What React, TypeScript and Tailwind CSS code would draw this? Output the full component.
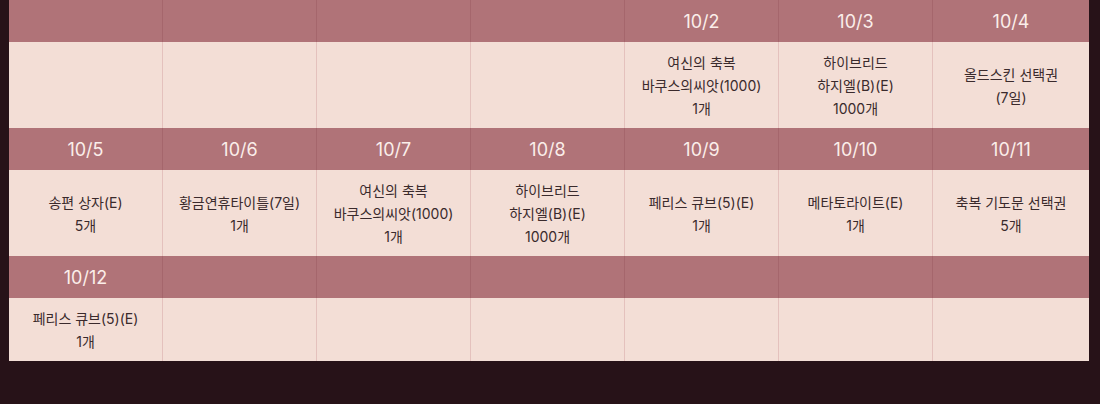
import React from "react";

type Cell = { date?: string; lines?: string[] };

const rows: Cell[][] = [
  [
    {},
    {},
    {},
    {},
    { date: "10/2", lines: ["여신의 축복", "바쿠스의씨앗(1000)", "1개"] },
    { date: "10/3", lines: ["하이브리드", "하지엘(B)(E)", "1000개"] },
    { date: "10/4", lines: ["올드스킨 선택권", "(7일)"] },
  ],
  [
    { date: "10/5", lines: ["송편 상자(E)", "5개"] },
    { date: "10/6", lines: ["황금연휴타이틀(7일)", "1개"] },
    { date: "10/7", lines: ["여신의 축복", "바쿠스의씨앗(1000)", "1개"] },
    { date: "10/8", lines: ["하이브리드", "하지엘(B)(E)", "1000개"] },
    { date: "10/9", lines: ["페리스 큐브(5)(E)", "1개"] },
    { date: "10/10", lines: ["메타토라이트(E)", "1개"] },
    { date: "10/11", lines: ["축복 기도문 선택권", "5개"] },
  ],
  [
    { date: "10/12", lines: ["페리스 큐브(5)(E)", "1개"] },
    {},
    {},
    {},
    {},
    {},
    {},
  ],
];

export default function App() {
  return (
    <div
      className="w-full h-[404px] bg-[#271218] pl-[9px] pr-[11px]"
      style={{ fontFamily: 'Inter, "Noto Sans CJK KR", "Noto Sans", sans-serif' }}
    >
      <div className="w-[1080px]">
        {rows.map((row, ri) => (
          <React.Fragment key={ri}>
            <div className="grid grid-cols-[repeat(6,154px)_1fr] bg-[#b07378] h-[42px]">
              {row.map((c, ci) => (
                <div
                  key={ci}
                  className={
                    "flex items-center justify-center text-[18px] text-[#fbeeea] " +
                    (ci < 6 ? "border-r border-[#a5666c]" : "")
                  }
                >
                  {c.date ?? ""}
                </div>
              ))}
            </div>
            <div className="grid grid-cols-[repeat(6,154px)_1fr] bg-[#f3ded6]">
              {row.map((c, ci) => (
                <div
                  key={ci}
                  className={
                    "flex flex-col items-center justify-center pt-[9px] pb-[8px] text-[14px] leading-[23px] text-[#3a2a2c] " +
                    (ci < 6 ? "border-r border-[#e4c1bd]" : "")
                  }
                >
                  {(c.lines ?? []).map((l, li) => (
                    <div key={li}>{l}</div>
                  ))}
                </div>
              ))}
            </div>
          </React.Fragment>
        ))}
      </div>
    </div>
  );
}
